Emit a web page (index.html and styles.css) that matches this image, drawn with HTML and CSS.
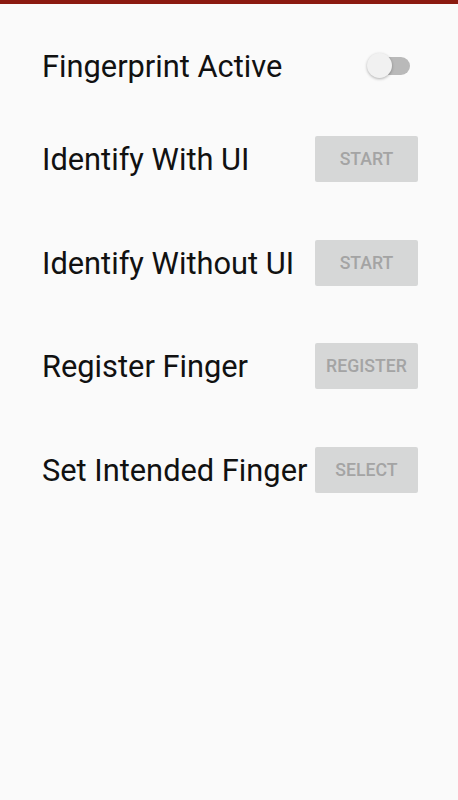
FILE: index.html
```html
<!DOCTYPE html>
<html>
<head>
<meta charset="utf-8">
<link rel="stylesheet" href="styles.css">
</head>
<body>
<div class="topbar"></div>
<main class="list">
  <div class="row row-toggle">
    <span class="label">Fingerprint Active</span>
    <span class="switch"><span class="track"></span><span class="thumb"></span></span>
  </div>
  <div class="row">
    <span class="label">Identify With UI</span>
    <button class="btn">Start</button>
  </div>
  <div class="row">
    <span class="label">Identify Without UI</span>
    <button class="btn">Start</button>
  </div>
  <div class="row">
    <span class="label">Register Finger</span>
    <button class="btn">Register</button>
  </div>
  <div class="row">
    <span class="label">Set Intended Finger</span>
    <button class="btn">Select</button>
  </div>
</main>
</body>
</html>
```
FILE: styles.css
```css
html, body {
  margin: 0;
  padding: 0;
  background: #fafafa;
  font-family: Roboto, "Noto Sans", sans-serif;
}
.topbar {
  height: 4px;
  background: #8b1a10;
}
.list {
  display: flex;
  flex-direction: column;
  gap: 57.4px;
  padding: 49px 40px 0 42px;
}
.row {
  display: flex;
  align-items: center;
  justify-content: space-between;
  height: 46px;
}
.row-toggle {
  height: 26px;
}
.label {
  font-size: 30.8px;
  line-height: 36px;
  padding-top: 2px;
  color: #111;
  white-space: nowrap;
}
.btn {
  flex: none;
  width: 103px;
  height: 46px;
  border: none;
  border-radius: 2px;
  background: #d6d7d7;
  color: #a4a4a4;
  font-family: Roboto, sans-serif;
  font-weight: 500;
  font-size: 17.7px;
  text-transform: uppercase;
  padding: 0;
}
.switch {
  flex: none;
  position: relative;
  width: 43px;
  height: 26px;
  margin-right: 8px;
}
.track {
  position: absolute;
  left: 4px;
  right: 0;
  top: 4px;
  height: 18px;
  border-radius: 9px;
  background: #b9b9b9;
}
.thumb {
  position: absolute;
  left: 0;
  top: 0;
  width: 25px;
  height: 25px;
  border-radius: 50%;
  background: #f1f1f1;
  box-shadow: 0 1px 3px rgba(0,0,0,0.3);
}
```
